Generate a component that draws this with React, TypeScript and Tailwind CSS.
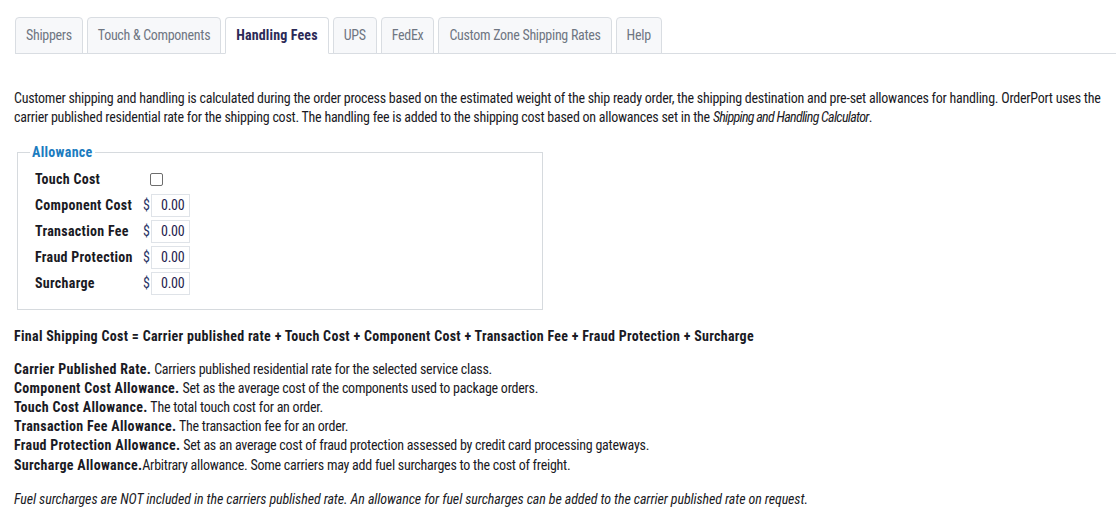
import { Fragment } from "react";

const tabs = ["Shippers", "Touch & Components", "Handling Fees", "UPS", "FedEx", "Custom Zone Shipping Rates", "Help"];

function MoneyInput() {
  return (
    <div className="flex items-center">
      <span className="w-[7px] text-[#2a3566]">$</span>
      <div className="ml-[1px] flex h-[23px] w-[39px] items-center border border-[#dfe3e8] bg-white pl-[9px] text-[#1f1d4d]">0.00</div>
    </div>
  );
}

export default function App() {
  const font = { fontFamily: "'Roboto Condensed', Roboto, 'Liberation Sans Narrow', sans-serif" };
  const rows = ["Component Cost", "Transaction Fee", "Fraud Protection", "Surcharge"];
  const defs: [string, string][] = [
    ["Carrier Published Rate.", " Carriers published residential rate for the selected service class."],
    ["Component Cost Allowance.", " Set as the average cost of the components used to package orders."],
    ["Touch Cost Allowance.", " The total touch cost for an order."],
    ["Transaction Fee Allowance.", " The transaction fee for an order."],
    ["Fraud Protection Allowance.", " Set as an average cost of fraud protection assessed by credit card processing gateways."],
    ["Surcharge Allowance.", "Arbitrary allowance. Some carriers may add fuel surcharges to the cost of freight."],
  ];
  return (
    <div style={font} className="min-h-[516px] w-[1116px] bg-white text-[14px] leading-[19.2px] tracking-[-0.25px] text-[#1a1a24]">
      <div className="pt-[17px] pl-[15px]">
        <div className="flex gap-[4px] border-b border-[#d9dde2]">
          {tabs.map((t) => {
            const active = t === "Handling Fees";
            return (
              <div
                key={t}
                className={
                  "-mb-px flex h-[37px] items-center rounded-t-[4px] border px-[10px] text-[14px] " +
                  (active
                    ? "border-[#d9dde2] border-b-white bg-white font-bold tracking-[0.15px] text-[#2c2a57]"
                    : "border-[#d9dde2] bg-[#f7f8fa] tracking-[-0.3px] text-[#6f7682]")
                }
              >
                {t}
              </div>
            );
          })}
        </div>
      </div>

      <p className="mt-[35px] pl-[14px] pr-[6px]">
        Customer shipping and handling is calculated during the order process based on the estimated weight of the ship ready order, the shipping destination and pre-set allowances for handling. OrderPort uses the carrier published residential rate for the shipping cost. The handling fee is added to the shipping cost based on allowances set in the <i className="tracking-[-0.7px]">Shipping and Handling Calculator</i>.
      </p>

      <fieldset className="mt-[16px] ml-[17px] w-[526px] border border-[#d6dade] pt-[7px] pb-[14px] pl-[17px]">
        <legend className="ml-[-5px] px-[2px] text-[14px] leading-[18px] font-bold tracking-[0.3px] text-[#1c7cbf]">Allowance</legend>
        <div className="grid grid-cols-[108px_auto] items-center gap-y-[3px]">
          <div className="h-[23px] leading-[23px] font-bold tracking-[0.3px]">Touch Cost</div>
          <div className="pl-[7px]">
            <div className="h-[13px] w-[13px] rounded-[2px] border border-[#6d6d6d] bg-white" />
          </div>
          {rows.map((r) => (
            <Fragment key={r}>
              <div className="h-[23px] leading-[23px] font-bold tracking-[0.3px]">{r}</div>
              <div>
                <MoneyInput />
              </div>
            </Fragment>
          ))}
        </div>
      </fieldset>

      <p className="mt-[17px] pl-[14px] font-bold tracking-[0.3px]">
        Final Shipping Cost = Carrier published rate + Touch Cost + Component Cost + Transaction Fee + Fraud Protection + Surcharge
      </p>

      <div className="mt-[13px] pl-[14px]">
        {defs.map(([b, t]) => (
          <div key={b}>
            <b className="tracking-[0.3px]">{b}</b>
            {t}
          </div>
        ))}
      </div>

      <p className="mt-[15px] pl-[14px] italic tracking-[-0.1px]">
        Fuel surcharges are NOT included in the carriers published rate. An allowance for fuel surcharges can be added to the carrier published rate on request.
      </p>
    </div>
  );
}
